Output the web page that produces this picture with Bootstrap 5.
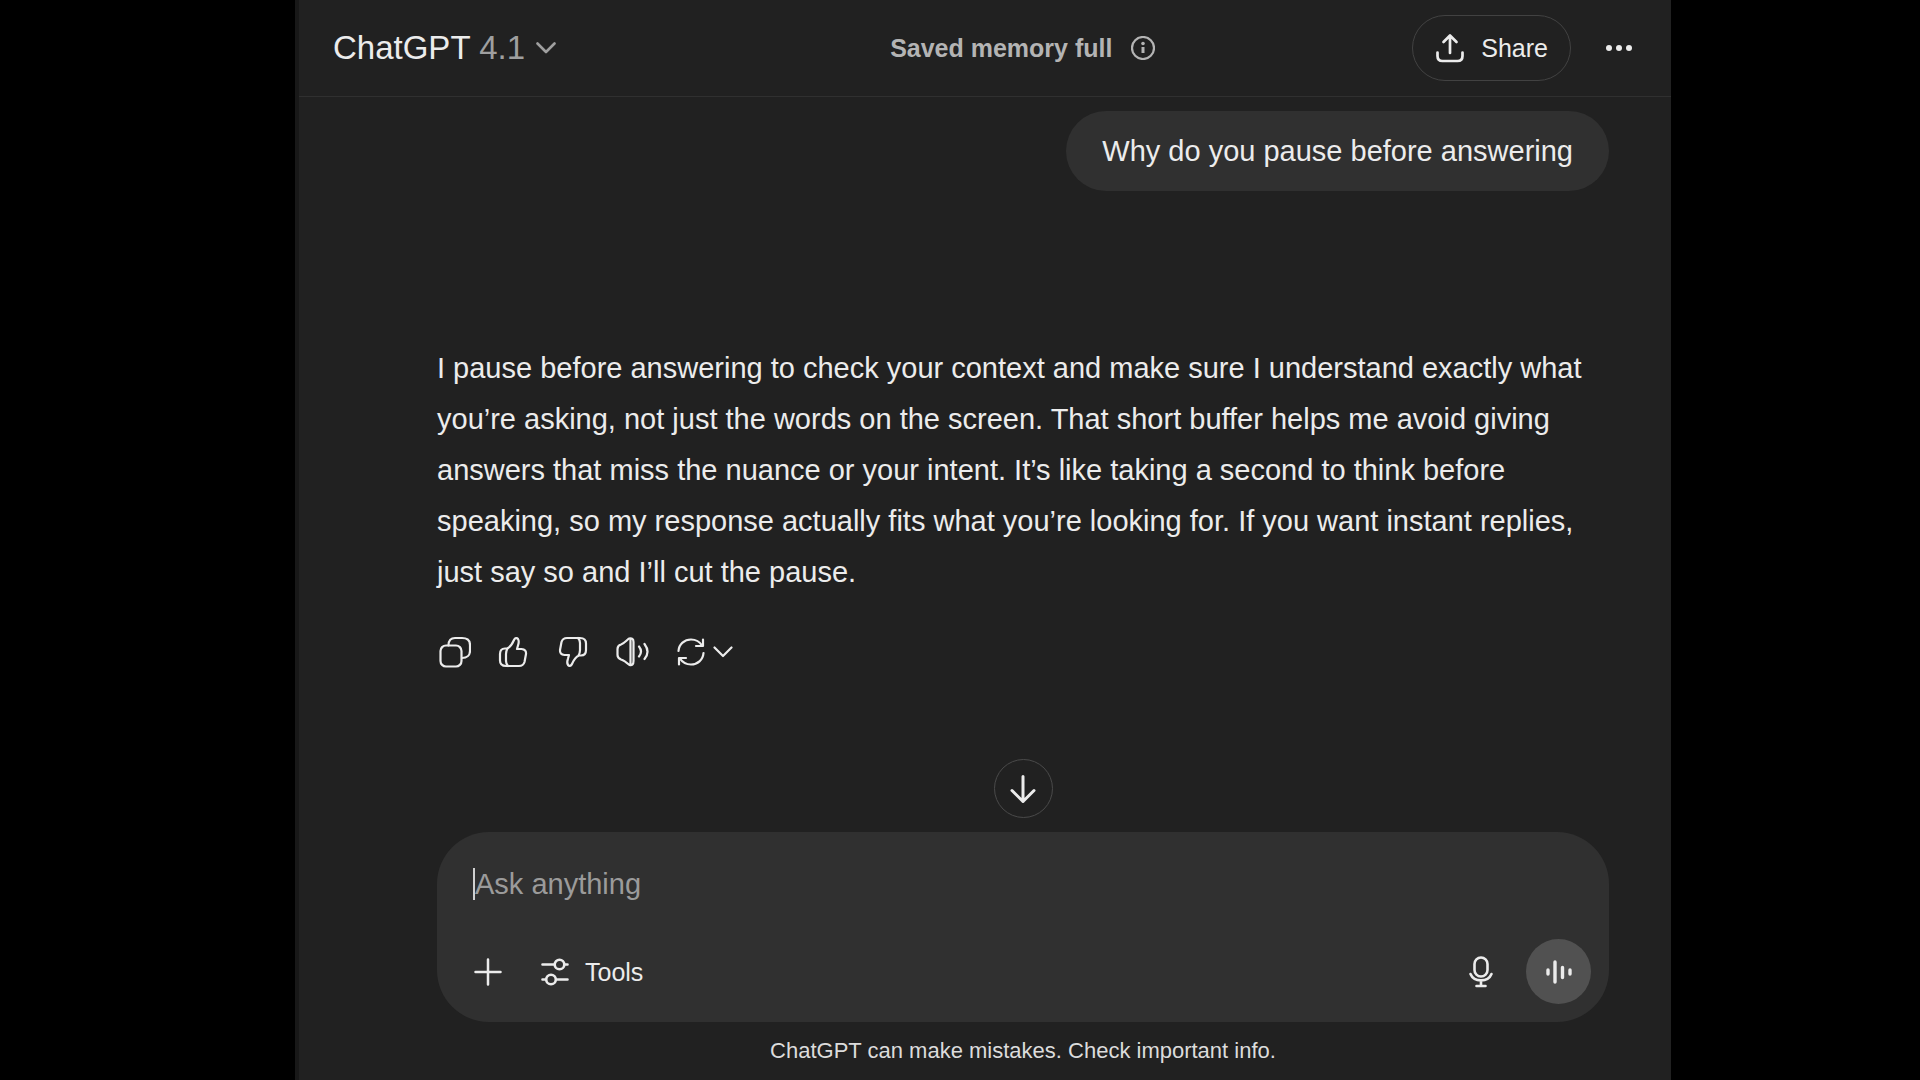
<!DOCTYPE html>
<html lang="en">
<head>
<meta charset="utf-8">
<meta name="viewport" content="width=device-width, initial-scale=1">
<title>ChatGPT</title>
<link href="https://cdn.jsdelivr.net/npm/bootstrap@5.3.0/dist/css/bootstrap.min.css" rel="stylesheet">
<style>
  body {
    background: #000;
    color: #ececec;
    font-family: "Liberation Sans", Arial, sans-serif;
    padding: 0 249px 0 295px;
  }
  svg { fill: none; stroke: currentColor; stroke-width: 2.2; stroke-linecap: round; stroke-linejoin: round; display: block; flex: none; }
  .btn {
    --bs-btn-color: #ececec;
    --bs-btn-hover-color: #fff;
    --bs-btn-padding-x: 0;
    --bs-btn-padding-y: 0;
    --bs-btn-font-size: 25px;
    --bs-btn-line-height: 30px;
    --bs-btn-border-width: 0;
  }
  .chat-app { background: #212121; border-left: 4px solid #181818; }
  .chat-head {
    display: grid;
    grid-template-columns: 7fr auto 6fr;
    align-items: center;
    padding: 15px 38px 15px 34px;
    border-bottom: 1px solid #303030;
  }
  .btn.model-pick { --bs-btn-font-size: 33px; --bs-btn-line-height: 40px; gap: 11px; }
  .model-pick span, .model-pick svg { color: #9f9f9f; }
  .memory-note { font-size: 25px; line-height: 30px; color: #b4b4b4; gap: 19px; }
  .btn.share-btn { --bs-btn-border-width: 1px; --bs-btn-border-color: #424242; --bs-btn-border-radius: 33px; height: 66px; padding: 0 22px; gap: 16px; }
  .head-actions { gap: 34px; }
  .chat-body { padding: 14px 62px 14px 138px; }
  .user-bubble { background: #303030; border-radius: 40px; padding: 20px 36px; font-size: 29px; line-height: 40px; }
  .reply { margin-top: 152px; font-size: 29px; line-height: 51px; }
  .reply-tools { margin-top: 38px; height: 32px; gap: 27px; padding-left: 2px; }
  .btn.jump-btn { --bs-btn-border-width: 1px; --bs-btn-border-color: #4a4a4a; width: 59px; height: 59px; }
  .chat-foot { padding: 0 62px 16px 138px; }
  .composer { background: #303030; border-radius: 52px; padding: 36px 18px 18px 36px; }
  .ask-input {
    background: transparent; color: #ececec; border: 0; border-left: 2px solid #d0d0d0; border-radius: 0;
    padding: 0; height: 32px; font-size: 29px; line-height: 32px; outline: 0; width: 90%; display: block;
  }
  .ask-input::placeholder { color: #9b9b9b; opacity: 1; }
  .composer-bar { margin-top: 39px; }
  .left-tools { gap: 38px; }
  .tools-btn { gap: 16px; }
  .right-tools { gap: 32px; }
  .btn.voice-btn { width: 65px; height: 65px; background: #515151; }
  .fine-print { font-size: 22px; line-height: 26px; margin-top: 16px; color: #dcdcdc; }
</style>
</head>
<body>
<div class="chat-app d-flex flex-column min-vh-100">
  <header class="chat-head">
    <button type="button" class="btn model-pick d-flex align-items-center me-auto">
      <div>ChatGPT <span>4.1</span></div>
      <svg width="20" height="12" viewBox="0 0 20 12"><path d="M1.500 1.500 10 10l8.500-8.500" stroke-width="2.600"/></svg>
    </button>
    <div class="memory-note d-flex align-items-center fw-bold">
      Saved memory full
      <svg width="24" height="24" viewBox="0 0 24 24"><circle cx="12" cy="12" r="11"/><path d="M12 11v6" stroke-width="3" stroke-linecap="butt"/><circle cx="12" cy="7.500" r="1.800" fill="currentColor" stroke="none"/></svg>
    </div>
    <div class="head-actions d-flex align-items-center justify-content-end">
      <button type="button" class="btn share-btn d-flex align-items-center">
        <svg width="30" height="30" viewBox="0 0 30 30"><path stroke-width="2.700" d="M15 20V3M8.500 9 15 2.500 21.500 9M2.500 19.500V23q0 5 5 5h15q5 0 5-5v-3.500"/></svg>
        Share
      </button>
      <button type="button" class="btn" aria-label="More options">
        <svg width="28" height="8" viewBox="0 0 28 8"><g fill="currentColor" stroke="none"><circle cx="4" cy="4" r="3"/><circle cx="14" cy="4" r="3"/><circle cx="24" cy="4" r="3"/></g></svg>
      </button>
    </div>
  </header>

  <main class="chat-body flex-grow-1 d-flex flex-column">
    <div class="user-bubble align-self-end">Why do you pause before answering</div>
    <p class="reply mb-0">I pause before answering to check your context and make sure I understand exactly what you’re asking, not just the words on the screen. That short buffer helps me avoid giving answers that miss the nuance or your intent. It’s like taking a second to think before speaking, so my response actually fits what you’re looking for. If you want instant replies, just say so and I’ll cut the pause.</p>
    <div class="reply-tools d-flex align-items-center">
      <button type="button" class="btn" aria-label="Copy">
        <svg width="32" height="32" viewBox="0 0 32 32"><rect x="1.500" y="9.500" width="21" height="21" rx="5.500"/><path d="M9.500 9.500C9.500 4 12 2 16 2h7q8 0 8 7v6c0 4-3 7-8 7"/></svg>
      </button>
      <button type="button" class="btn" aria-label="Good response">
        <svg width="32" height="32" viewBox="-1 -1 32 32"><path d="M6 11.500H8C11.500 10 13.500 6.500 15 3 16 .8 18 .6 19 2c1 1.500 1 3.500 0 6.500l-1 3.500h4.500q5 .500 4.500 5L25.500 25q-1.200 4-5.500 4H7Q1 29 1 23.500V17q0-5.500 5-5.500M8.500 11.500Q7 14 7 17v7q0 3 2 5"/></svg>
      </button>
      <button type="button" class="btn" aria-label="Bad response">
        <svg width="32" height="32" viewBox="-1 -1 32 32"><path transform="rotate(180 14.500 15)" d="M6 11.500H8C11.500 10 13.500 6.500 15 3 16 .8 18 .6 19 2c1 1.500 1 3.500 0 6.500l-1 3.500h4.500q5 .500 4.500 5L25.500 25q-1.200 4-5.500 4H7Q1 29 1 23.500V17q0-5.500 5-5.500M8.500 11.500Q7 14 7 17v7q0 3 2 5"/></svg>
      </button>
      <button type="button" class="btn" aria-label="Read aloud">
        <svg width="34" height="32" viewBox="0 -1 34 32"><path d="M1.500 12q0-3.500 3.500-4.500C8 6.500 10 4 13 1.500q4.500-1 4.500 3.500v19q0 5-4 4C10 25 8 23.500 5 22.500Q1.500 21 1.500 18ZM14.500 2v26M23 9.500q4 5 0 10M28.500 7q6 8 0 15"/></svg>
      </button>
      <button type="button" class="btn d-flex align-items-center gap-2" aria-label="Try again">
        <svg width="28" height="28" viewBox="0 0 28 28"><path d="M1.500 13C2 6 7.500 1.500 14 1.500c5 0 8.500 2 11 6M26 1.500V8h-7M26.500 15C26 22 20.500 26.500 14 26.500c-5 0-8.500-2-11-6M2 26.500V20h7"/></svg>
        <svg width="20" height="12" viewBox="0 0 20 12"><path d="M1.500 1.500 10 10l8.500-8.500"/></svg>
      </button>
    </div>
    <button type="button" class="btn jump-btn rounded-circle d-flex align-items-center justify-content-center mx-auto mt-auto" aria-label="Scroll to bottom">
      <svg width="26" height="28" viewBox="0 0 26 28"><path stroke-width="3" d="M13 1.500v25M2 15.500l11 11 11-11"/></svg>
    </button>
  </main>

  <footer class="chat-foot">
    <form class="composer">
      <input type="text" class="ask-input" placeholder="Ask anything" aria-label="Ask anything" autocomplete="off">
      <div class="composer-bar d-flex align-items-center justify-content-between">
        <div class="left-tools d-flex align-items-center">
          <button type="button" class="btn" aria-label="Add files"><svg width="30" height="28" viewBox="0 0 30 28"><path stroke-width="2.500" d="M15 1.500v25M2.500 14h25"/></svg></button>
          <button type="button" class="btn tools-btn d-flex align-items-center">
            <svg width="28" height="28" viewBox="0 0 28 28"><g stroke-width="2.600"><path d="M1.500 6.500h12M24 6.500h2.500M1.500 21.500h3M15.500 21.500h11"/><circle cx="18.500" cy="6.500" r="4.800"/><circle cx="10" cy="21.500" r="4.800"/></g></svg>
            Tools
          </button>
        </div>
        <div class="right-tools d-flex align-items-center">
          <button type="button" class="btn" aria-label="Dictate"><svg width="26" height="32" viewBox="0 0 26 32"><g stroke-width="2.600"><rect x="6.500" y="1.500" width="13" height="19" rx="6.500"/><path d="M2.500 18C6 26.500 20 26.500 23.500 18M13 24.500V30M8.500 30h9"/></g></svg></button>
          <button type="button" class="btn voice-btn rounded-circle d-flex align-items-center justify-content-center" aria-label="Use voice mode"><svg width="28" height="26" viewBox="0 0 28 26"><path stroke-width="3.400" d="M3 11v4M10 3v20M17.500 8.500v10M25 11v4"/></svg></button>
        </div>
      </div>
    </form>
    <p class="fine-print text-center mb-0">ChatGPT can make mistakes. Check important info.</p>
  </footer>
</div>
<script src="https://cdn.jsdelivr.net/npm/bootstrap@5.3.0/dist/js/bootstrap.bundle.min.js"></script>
</body>
</html>
